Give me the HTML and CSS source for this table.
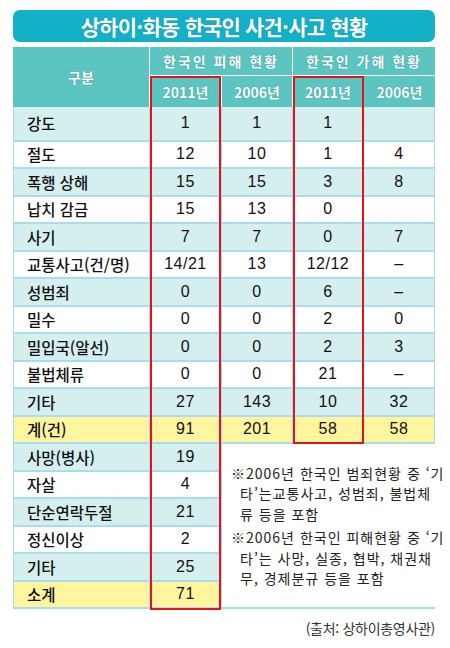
FILE: index.html
```html
<!DOCTYPE html>
<html lang="ko">
<head>
    <meta charset="UTF-8">
    <meta name="viewport" content="width=device-width, initial-scale=1.0">
    <title>상하이·화동 한국인 사건·사고 현황</title>
    <link rel="stylesheet" href="styles.css">
</head>
<body>
    <div class="page">
        <h1 class="title">상하이·화동 한국인 사건·사고 현황</h1>

        <div class="board">
            <div class="head">
                <div class="h-cell h-label">구분</div>
                <div class="h-cell h-group">한국인 피해 현황</div>
                <div class="h-cell h-group">한국인 가해 현황</div>
                <div class="h-cell">2011년</div>
                <div class="h-cell">2006년</div>
                <div class="h-cell">2011년</div>
                <div class="h-cell">2006년</div>
            </div>

            <div class="body">
                <div class="row tint first"><div class="lbl">강도</div><div>1</div><div>1</div><div>1</div><div></div></div>
                <div class="row"><div class="lbl">절도</div><div>12</div><div>10</div><div>1</div><div>4</div></div>
                <div class="row tint"><div class="lbl">폭행 상해</div><div>15</div><div>15</div><div>3</div><div>8</div></div>
                <div class="row"><div class="lbl">납치 감금</div><div>15</div><div>13</div><div>0</div><div></div></div>
                <div class="row tint"><div class="lbl">사기</div><div>7</div><div>7</div><div>0</div><div>7</div></div>
                <div class="row"><div class="lbl">교통사고(건/명)</div><div>14/21</div><div>13</div><div>12/12</div><div>–</div></div>
                <div class="row tint"><div class="lbl">성범죄</div><div>0</div><div>0</div><div>6</div><div>–</div></div>
                <div class="row"><div class="lbl">밀수</div><div>0</div><div>0</div><div>2</div><div>0</div></div>
                <div class="row tint"><div class="lbl">밀입국(알선)</div><div>0</div><div>0</div><div>2</div><div>3</div></div>
                <div class="row"><div class="lbl">불법체류</div><div>0</div><div>0</div><div>21</div><div>–</div></div>
                <div class="row tint"><div class="lbl">기타</div><div>27</div><div>143</div><div>10</div><div>32</div></div>
                <div class="row total"><div class="lbl">계(건)</div><div>91</div><div>201</div><div>58</div><div>58</div></div>

                <div class="lower">
                    <div class="lbl tint">사망(병사)</div><div class="tint">19</div>
                    <div class="notes">
                        <p class="note">※2006년 한국인 범죄현황 중 ‘기<br>타’는교통사고, 성범죄, 불법체<br>류 등을 포함</p>
                        <p class="note">※2006년 한국인 피해현황 중 ‘기<br>타’는 사망, 실종, 협박, 채권채<br>무, 경제분규 등을 포함</p>
                    </div>
                    <div class="lbl">자살</div><div>4</div>
                    <div class="lbl tint">단순연락두절</div><div class="tint">21</div>
                    <div class="lbl">정신이상</div><div>2</div>
                    <div class="lbl tint">기타</div><div class="tint">25</div>
                    <div class="lbl total">소계</div><div class="total">71</div>
                </div>
            </div>

            <div class="mark mark-victim"></div>
            <div class="mark mark-offender"></div>
        </div>

        <p class="source">(출처: 상하이총영사관)</p>
    </div>
</body>
</html>
```

FILE: styles.css
```css
/* Base */
* {
    margin: 0;
    padding: 0;
    box-sizing: border-box;
}

body {
    background: #fff;
    font-family: 'Liberation Sans', 'Noto Sans CJK KR', sans-serif;
    color: #111;
}

.page {
    width: 450px;
    padding: 10px 15px 0 13px;
}

/* Title bar */
.title {
    height: 32px;
    width: 422px;
    border-radius: 7px;
    background: #12b1c7;
    color: #fff;
    font-family: 'Noto Sans CJK KR', sans-serif;
    font-size: 21px;
    font-weight: 700;
    letter-spacing: -0.8px;
    line-height: 32px;
    text-align: center;
    text-shadow: 0 0 1px rgba(0, 80, 100, 0.5);
}

/* Table */
.board {
    position: relative;
    width: 422px;
    margin-top: 5px;
}

.head {
    display: grid;
    grid-template-columns: 136px 71px 70px 70px 71px;
    grid-template-rows: 28px 31px;
    gap: 1px;
    background: #fff;
}

.h-cell {
    display: flex;
    align-items: center;
    justify-content: center;
    background: #5cc4c1;
    color: #fff;
    font-family: 'Noto Sans CJK KR', sans-serif;
    font-size: 14px;
    font-weight: 700;
    text-shadow: 0 0 1px rgba(0, 90, 90, 0.6);
}

.h-label {
    grid-row: 1 / 3;
}

.h-group {
    grid-column: span 2;
    letter-spacing: 2px;
}

.body {
    display: flex;
    flex-direction: column;
    gap: 2px;
    padding: 0 1px 2px;
    background: #a9dcec;
}

.row {
    display: grid;
    grid-template-columns: 135px 71px 70px 70px 70px;
    grid-auto-rows: 25.5px;
    column-gap: 1px;
}

.row.first {
    grid-auto-rows: 32.5px;
}

.row > div,
.lower > div {
    display: flex;
    align-items: center;
    justify-content: center;
    background: #fff;
    font-size: 16px;
    letter-spacing: 0.5px;
}

.row.tint > div,
.lower > .tint {
    background: #d5eeee;
}

.row.total > div,
.lower > .total {
    background: #fff59f;
}

.row > .lbl,
.lower > .lbl {
    justify-content: flex-start;
    padding-left: 13px;
    font-family: 'Noto Sans CJK KR', sans-serif;
    font-size: 15.5px;
    font-weight: 500;
    letter-spacing: 0;
}

.lower {
    display: grid;
    grid-template-columns: 135px 71px 1fr;
    grid-auto-rows: 25.5px;
    gap: 2px 1px;
}

.lower > .notes {
    grid-column: 3;
    grid-row: 1 / span 6;
    flex-direction: column;
    align-items: flex-start;
    gap: 3px;
    padding-left: 9px;
    background: #fff;
}

.note {
    padding-left: 9px;
    text-indent: -9px;
    font-family: 'Noto Sans CJK KR', sans-serif;
    font-size: 14px;
    line-height: 20.5px;
    letter-spacing: 1px;
    color: #222;
    white-space: nowrap;
}

/* Red highlight boxes */
.mark {
    position: absolute;
    top: 29px;
    width: 71px;
    border: 2px solid #e3121b;
}

.mark-victim {
    left: 137px;
    height: 534px;
}

.mark-offender {
    left: 280px;
    height: 368px;
}

.source {
    margin-top: 9px;
    width: 422px;
    text-align: right;
    font-family: 'Noto Sans CJK KR', sans-serif;
    font-size: 14px;
    letter-spacing: -0.3px;
    color: #333;
}
```
